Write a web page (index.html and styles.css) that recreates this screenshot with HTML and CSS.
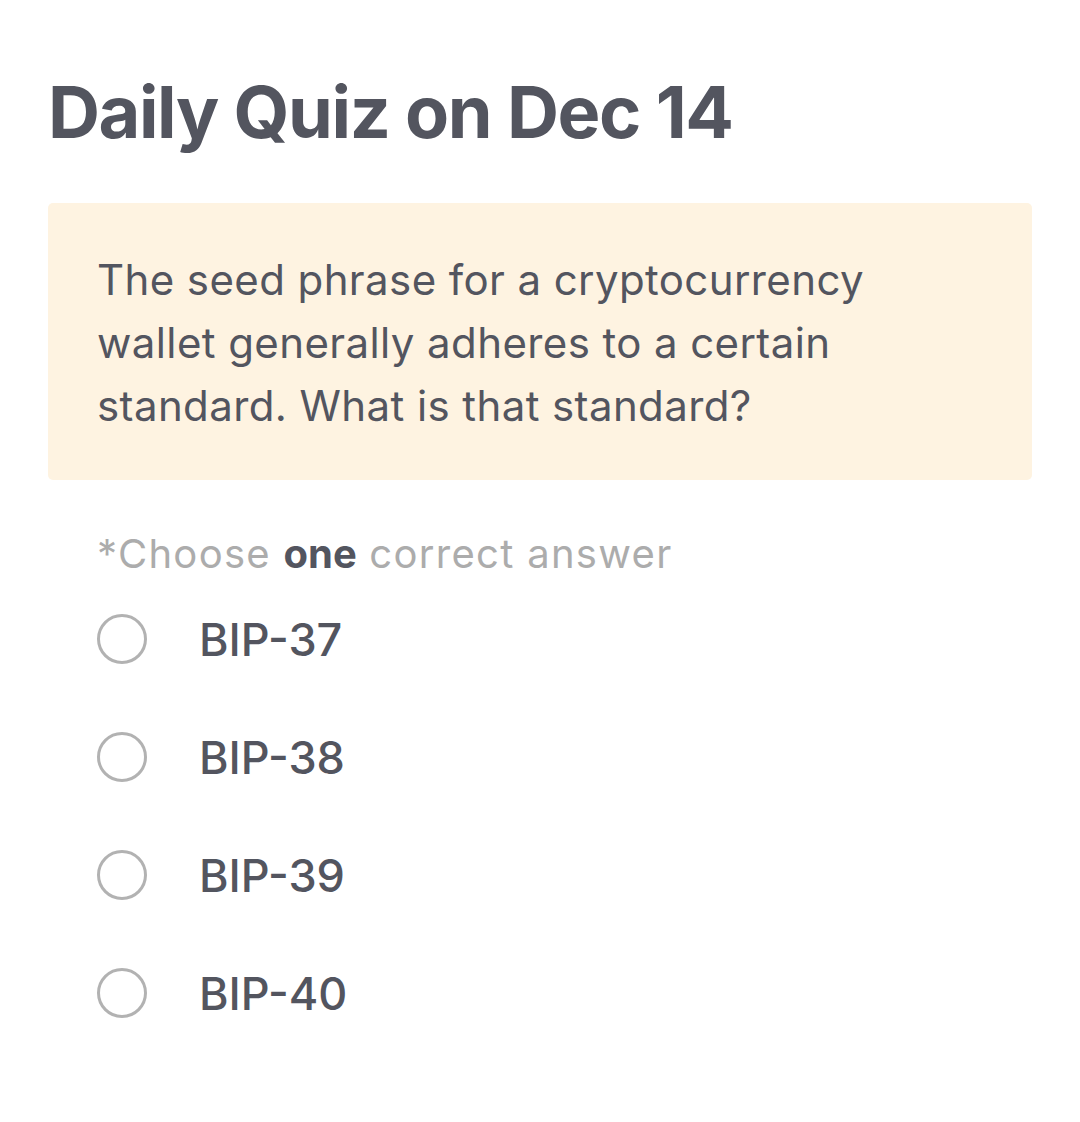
FILE: index.html
```html
<!DOCTYPE html>
<html lang="en">
<head>
  <meta charset="UTF-8">
  <meta name="viewport" content="width=device-width, initial-scale=1.0">
  <title>Daily Quiz</title>
  <link rel="stylesheet" href="styles.css">
</head>
<body>
<div class="quiz">
  <h1>Daily Quiz on Dec 14</h1>
  <div class="question">
    The seed phrase for a cryptocurrency wallet generally adheres to a certain standard. What is that standard?
  </div>
  <p class="hint">*Choose <b>one</b> correct answer</p>
  <ul class="options">
    <li><span class="radio"></span><span class="label">BIP-37</span></li>
    <li><span class="radio"></span><span class="label">BIP-38</span></li>
    <li><span class="radio"></span><span class="label">BIP-39</span></li>
    <li><span class="radio"></span><span class="label">BIP-40</span></li>
  </ul>
</div>
</body>
</html>
```

FILE: styles.css
```css
body {
  font-family: Inter, "Noto Sans", sans-serif;
  margin: 0;
  padding: 0;
  background-color: #fff;
  color: #53555f;
}

.quiz {
  padding: 62px 48px 40px;
}

h1 {
  font-size: 72px;
  font-weight: 700;
  letter-spacing: -1.4px;
  line-height: 100px;
  margin: 0 0 41px;
}

.question {
  background-color: #fef3e1;
  border-radius: 5px;
  padding: 45px 120px 43px 49px;
  font-size: 42px;
  font-weight: 400;
  line-height: 63px;
  letter-spacing: 0.4px;
}

.hint {
  margin: 46px 0 0 49px;
  font-size: 40px;
  line-height: 56px;
  color: #acacac;
  letter-spacing: 1.3px;
}

.hint b {
  color: #53555f;
  font-weight: 700;
  letter-spacing: 0;
}

.options {
  list-style: none;
  margin: 0;
  padding: 0 0 0 49px;
}

.options li {
  display: flex;
  align-items: center;
  height: 118px;
}

.options li:first-child {
  margin-top: -2px;
}

.radio {
  width: 44px;
  height: 44px;
  border: 3px solid #b2b2b2;
  border-radius: 50%;
  flex: none;
}

.label {
  margin-left: 52px;
  font-size: 45px;
  font-weight: 500;
  letter-spacing: 0;
}
```
